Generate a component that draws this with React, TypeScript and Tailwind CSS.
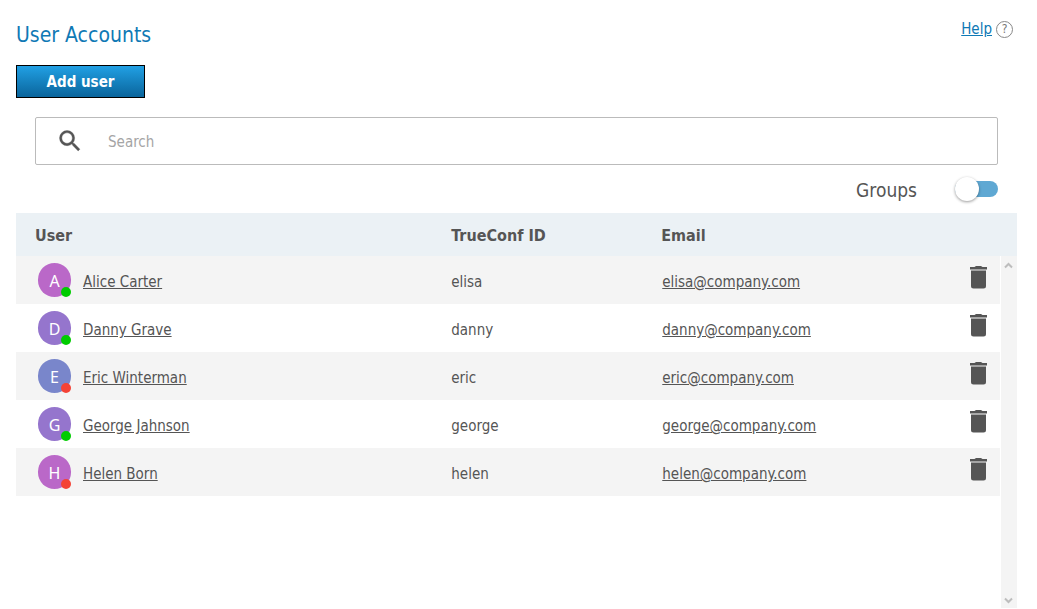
import { useState } from "react";

type User = {
  id: string;
  name: string;
  email: string;
  color: string;
  online: boolean;
};

const users: User[] = [
  { id: "elisa", name: "Alice Carter", email: "elisa@company.com", color: "bg-[#ba68c8]", online: true },
  { id: "danny", name: "Danny Grave", email: "danny@company.com", color: "bg-[#9575cd]", online: true },
  { id: "eric", name: "Eric Winterman", email: "eric@company.com", color: "bg-[#7986cb]", online: false },
  { id: "george", name: "George Jahnson", email: "george@company.com", color: "bg-[#9575cd]", online: true },
  { id: "helen", name: "Helen Born", email: "helen@company.com", color: "bg-[#ba68c8]", online: false },
];

function SearchIcon() {
  return (
    <svg className="h-7 w-7 shrink-0" viewBox="0 0 24 24" fill="#555" stroke="#555" strokeWidth="0.3" aria-hidden="true">
      <path d="M15.5 14h-.79l-.28-.27A6.47 6.47 0 0 0 16 9.5 6.5 6.5 0 1 0 9.5 16c1.61 0 3.09-.59 4.23-1.57l.27.28v.79l5 4.99L20.49 19l-4.99-5zm-6 0C7.01 14 5 11.99 5 9.5S7.01 5 9.5 5 14 7.01 14 9.5 11.99 14 9.5 14z" />
    </svg>
  );
}

function TrashIcon() {
  return (
    <svg className="h-[23px] w-[17px]" viewBox="0 0 17 23" fill="#555" aria-hidden="true">
      <path d="M6 0h5l1.500 1H17v2.500H0V1h4.500z" />
      <path d="M1 4.500h15V20a2.500 2.500 0 0 1-2.500 2.500h-10A2.500 2.500 0 0 1 1 20z" />
    </svg>
  );
}

function Arrow({ down = false }: { down?: boolean }) {
  return (
    <svg className="h-[7px] w-[9px]" viewBox="0 0 9 7" fill="none" stroke="#bdbdbd" strokeWidth="2" aria-hidden="true">
      <path d={down ? "M1 1.500l3.500 3.500L8 1.500" : "M1 5.500L4.500 2 8 5.500"} />
    </svg>
  );
}

function Avatar({ user }: { user: User }) {
  return (
    <span className={`relative flex h-[34px] w-[33px] shrink-0 items-center justify-center rounded-full pt-0.5 font-['Noto_Sans',sans-serif] text-base text-white ${user.color}`}>
      {user.name[0]}
      <span
        className={`absolute right-0 bottom-0 h-2.5 w-2.5 rounded-full ${user.online ? "bg-[#00cc00]" : "bg-[#f44336]"}`}
      />
    </span>
  );
}

export default function App() {
  const [search, setSearch] = useState("");
  const [groups, setGroups] = useState(false);

  const rows = users.filter((u) => u.name.toLowerCase().includes(search.toLowerCase()));

  return (
    <div className="flex min-h-screen flex-col bg-white pr-5 pb-px pl-4 font-['DejaVu_Sans_Condensed','Noto_Sans',sans-serif] text-[15px] leading-5 text-[#555]">
      <header className="flex items-start justify-between pt-[19px] pr-1">
        <h1 className="pt-0.5 text-[21px] leading-7 text-[#0f79b5]">User Accounts</h1>
        <a href="#help" className="flex items-center gap-1 text-[#0f79b5]">
          <span className="underline">Help</span>
          <span className="flex h-[17px] w-[17px] items-center justify-center rounded-full border border-[#888] text-xs text-[#777]">
            ?
          </span>
        </a>
      </header>

      <div className="pt-4">
        <button
          type="button"
          className="h-[33px] w-[129px] border border-black bg-linear-to-b from-[#21a0e4] to-[#0a659c] pt-px font-bold text-white"
        >
          Add user
        </button>
      </div>

      <label className="mt-[19px] mr-[19px] ml-[19px] flex h-12 items-center gap-6 rounded-xs border border-[#bbb] pl-5">
        <SearchIcon />
        <input
          type="text"
          aria-label="Search"
          placeholder="Search"
          value={search}
          onChange={(e) => setSearch(e.target.value)}
          className="h-full flex-1 pt-0.5 outline-none placeholder:text-[#a5a5a5]"
        />
      </label>

      <label className="mr-[19px] flex h-12 items-center justify-end gap-[38px] text-[19px]">
        <span className="pt-0.5">Groups</span>
        <span className="relative flex h-4 w-[43px] items-center">
          <input
            type="checkbox"
            checked={groups}
            onChange={(e) => setGroups(e.target.checked)}
            className="peer h-4 w-full appearance-none rounded-full bg-[#5fa8d3]"
          />
          <span className="pointer-events-none absolute left-0 h-6 w-6 rounded-full bg-white shadow-[0_1px_3px_rgba(0,0,0,0.4)] peer-checked:right-0 peer-checked:left-auto" />
        </span>
      </label>

      <div className="flex flex-1 items-stretch">
        <div className="flex-1">
          <table className="w-full table-fixed text-left">
            <thead>
              <tr className="h-[43px] bg-[#ebf1f5] text-base">
                <th className="w-[42%] pt-0.5 pl-[19px]">User</th>
                <th className="w-[210px] pt-0.5 pl-[22px]">TrueConf ID</th>
                <th className="pt-0.5 pl-[22px]">Email</th>
                <th className="w-12" aria-label="Delete" />
              </tr>
            </thead>
            <tbody>
              {rows.map((user) => (
                <tr key={user.id} className="h-12 odd:bg-[#f4f4f4]">
                  <td className="pl-[22px]">
                    <div className="flex items-center gap-3">
                      <Avatar user={user} />
                      <a href={`#${user.id}`} className="pt-1 underline">
                        {user.name}
                      </a>
                    </div>
                  </td>
                  <td className="pt-1 pl-[22px]">{user.id}</td>
                  <td className="pt-1 pl-[23px]">
                    <a href={`mailto:${user.email}`} className="underline">
                      {user.email}
                    </a>
                  </td>
                  <td className="pb-1.5 pl-[18px]">
                    <button type="button" aria-label={`Delete ${user.name}`} className="block">
                      <TrashIcon />
                    </button>
                  </td>
                </tr>
              ))}
            </tbody>
          </table>
        </div>

        {/* scroll track */}
        <div className="flex w-[17px] flex-col">
          <div className="h-[43px] bg-[#ebf1f5]" />
          <div className="ml-px flex flex-1 flex-col items-center justify-between bg-[#f4f4f4] pt-1.5 pr-px pb-1">
            <Arrow />
            <Arrow down />
          </div>
        </div>
      </div>
    </div>
  );
}
